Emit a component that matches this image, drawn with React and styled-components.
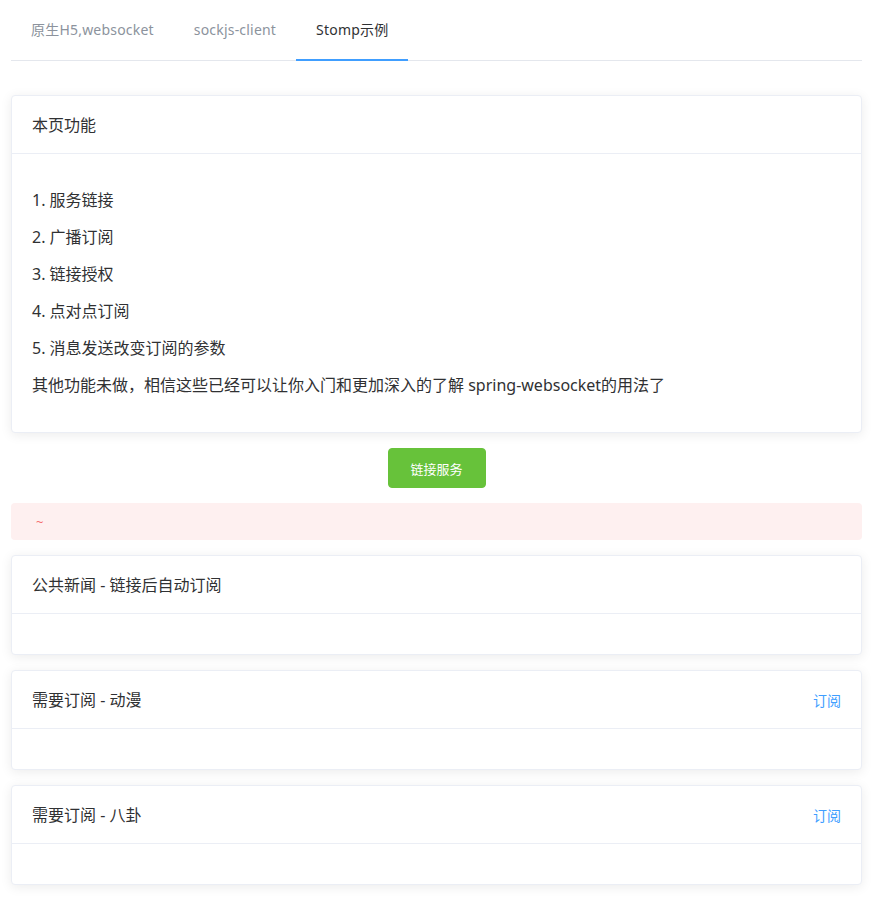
import React, { useState } from "react";
import styled, { createGlobalStyle } from "styled-components";

const GlobalStyle = createGlobalStyle`
  html, body {
    margin: 0;
    padding: 0;
    background: #fff;
  }
  body {
    font-family: "Noto Sans", "Noto Sans CJK SC", sans-serif;
    color: #303133;
  }
`;

const Page = styled.div`
  width: 851px;
  padding: 10px 0 24px 11px;
`;

const TabNav = styled.div`
  display: flex;
  border-bottom: 1px solid #e4e7ed;
  margin-bottom: 34px;
`;

const Tab = styled.div`
  position: relative;
  padding: 10px 20px 20px;
  font-size: 14px;
  line-height: 20px;
  letter-spacing: 0.2px;
  color: ${(p) => (p.$active ? "#303133" : "#8c939d")};
  cursor: pointer;

  &:after {
    content: "";
    position: absolute;
    left: 0;
    right: 0;
    bottom: -1px;
    height: 2px;
    background: ${(p) => (p.$active ? "#409eff" : "transparent")};
  }
`;

const Card = styled.div`
  border: 1px solid #ebeef5;
  border-radius: 4px;
  background: #fff;
  box-shadow: 0 2px 12px 0 rgba(0, 0, 0, 0.08);
  margin-bottom: 15px;
  overflow: hidden;
`;

const CardHeader = styled.div`
  display: flex;
  align-items: center;
  justify-content: space-between;
  padding: 19px 20px 17px;
  border-bottom: 1px solid #ebeef5;
  font-size: 16px;
  line-height: 21px;
  color: #303133;
`;

const CardBody = styled.div`
  padding: 20px;
  font-size: 16px;
  line-height: 21px;
`;

const Para = styled.p`
  margin: 16px 0;
`;

const LinkButton = styled.button`
  border: none;
  background: none;
  padding: 0;
  font-family: inherit;
  font-size: 14px;
  line-height: 20px;
  color: #409eff;
  cursor: pointer;
`;

const ButtonRow = styled.div`
  display: flex;
  justify-content: center;
  margin-bottom: 15px;
`;

const SuccessButton = styled.button`
  width: 98px;
  height: 40px;
  border: 1px solid #67c23a;
  border-radius: 4px;
  background: #67c23a;
  color: #fff;
  font-family: inherit;
  font-size: 13px;
  cursor: pointer;
`;

const Alert = styled.div`
  background: #fef0f0;
  border-radius: 4px;
  padding: 10px 16px 9px;
  margin-bottom: 15px;
  color: #f56c6c;
  font-size: 13px;
  line-height: 18px;
`;

const AlertText = styled.span`
  padding: 0 9px;
`;

const tabs = ["原生H5,websocket", "sockjs-client", "Stomp示例"];

const features = [
  "1. 服务链接",
  "2. 广播订阅",
  "3. 链接授权",
  "4. 点对点订阅",
  "5. 消息发送改变订阅的参数",
  "其他功能未做，相信这些已经可以让你入门和更加深入的了解 spring-websocket的用法了",
];

const topics = [
  { title: "公共新闻 - 链接后自动订阅", subscribe: false },
  { title: "需要订阅 - 动漫", subscribe: true },
  { title: "需要订阅 - 八卦", subscribe: true },
];

export default function App() {
  const [active, setActive] = useState(2);

  return (
    <Page>
      <GlobalStyle />
      <TabNav>
        {tabs.map((t, i) => (
          <Tab key={t} $active={i === active} onClick={() => setActive(i)}>
            {t}
          </Tab>
        ))}
      </TabNav>

      <Card>
        <CardHeader>本页功能</CardHeader>
        <CardBody>
          {features.map((f) => (
            <Para key={f}>{f}</Para>
          ))}
        </CardBody>
      </Card>

      <ButtonRow>
        <SuccessButton>链接服务</SuccessButton>
      </ButtonRow>

      <Alert>
        <AlertText>~</AlertText>
      </Alert>

      {topics.map((t) => (
        <Card key={t.title}>
          <CardHeader>
            <span>{t.title}</span>
            {t.subscribe && <LinkButton>订阅</LinkButton>}
          </CardHeader>
          <CardBody />
        </Card>
      ))}
    </Page>
  );
}
